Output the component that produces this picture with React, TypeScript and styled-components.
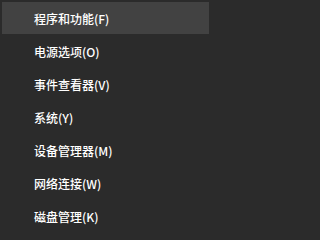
import React from "react";
import styled, { createGlobalStyle } from "styled-components";

const GlobalStyle = createGlobalStyle`
    html, body {
        margin: 0;
        padding: 0;
        background: #2b2b2b;
    }
`;

const items = [
    "程序和功能(F)",
    "电源选项(O)",
    "事件查看器(V)",
    "系统(Y)",
    "设备管理器(M)",
    "网络连接(W)",
    "磁盘管理(K)",
];

export default function App() {
    return (
        <>
            <GlobalStyle />
            <Menu>
                {items.map((label, i) => (
                    <Item key={label} $active={i === 0}>
                        {label}
                    </Item>
                ))}
            </Menu>
        </>
    );
}

const Menu = styled.div`
    width: 209px;
    height: 234px;
    box-sizing: border-box;
    padding: 2px 0 0 2px;
    display: flex;
    flex-direction: column;
    background: #2b2b2b;
    overflow: hidden;
`;

const Item = styled.div<{ $active?: boolean }>`
    height: 32px;
    margin-bottom: 1px;
    display: flex;
    align-items: center;
    padding-left: 32px;
    background: ${(p) => (p.$active ? "#424242" : "transparent")};
    color: #ffffff;
    font-family: "Noto Sans CJK SC", "Noto Sans", sans-serif;
    font-size: 12px;
    font-weight: 500;
    white-space: nowrap;
`;
